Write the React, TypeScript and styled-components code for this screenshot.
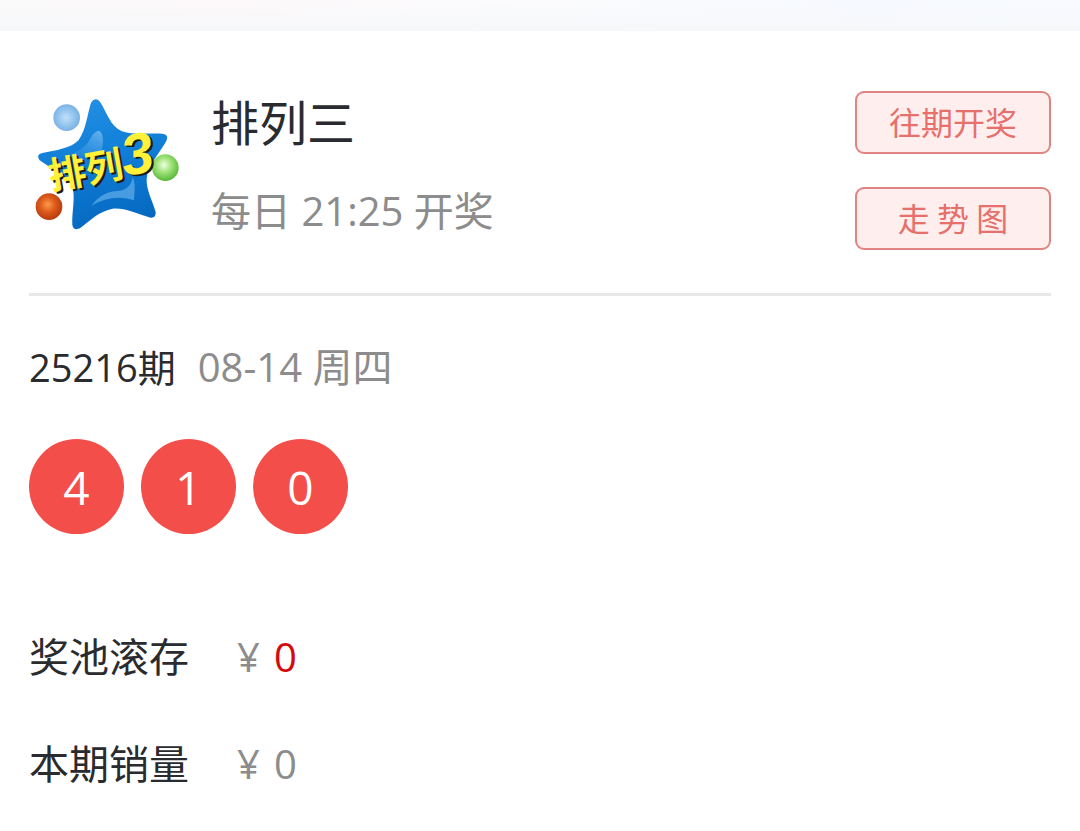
import styled, { createGlobalStyle } from "styled-components";

const balls = [4, 1, 0];

const stats = [
  { label: "奖池滚存", amount: "0", highlight: true },
  { label: "本期销量", amount: "0", highlight: false },
];

const Logo = () => (
  <LogoSvg viewBox="27 18 456 456" role="img" aria-label="排列3">
    <defs>
      <linearGradient id="star" x1="0.3" y1="0" x2="0.5" y2="1">
        <stop offset="0" stopColor="#2390e4" />
        <stop offset="0.5" stopColor="#0f7cd6" />
        <stop offset="1" stopColor="#0568c0" />
      </linearGradient>
      <linearGradient id="shine" x1="0.8" y1="0" x2="0.2" y2="1">
        <stop offset="0" stopColor="#86c4f4" stopOpacity="0.65" />
        <stop offset="1" stopColor="#3b9be8" stopOpacity="0.15" />
      </linearGradient>
      <radialGradient id="blueBall" cx="0.48" cy="0.5" r="0.52">
        <stop offset="0" stopColor="#c2e0f8" />
        <stop offset="0.6" stopColor="#93c4ee" />
        <stop offset="1" stopColor="#79b0e2" />
      </radialGradient>
      <radialGradient id="greenBall" cx="0.45" cy="0.4" r="0.6">
        <stop offset="0" stopColor="#f0ffe6" />
        <stop offset="0.45" stopColor="#a2e47c" />
        <stop offset="1" stopColor="#58b839" />
      </radialGradient>
      <radialGradient id="orangeBall" cx="0.45" cy="0.42" r="0.58">
        <stop offset="0" stopColor="#ff9a48" />
        <stop offset="0.5" stopColor="#dc5a1c" />
        <stop offset="1" stopColor="#b93a0c" />
      </radialGradient>
    </defs>
    <path
      fill="url(#star)"
      d="M213 53Q225 34 240 50C259 79 271 124 306 139C340 151 389 144 427 146Q448 149 439 168C421 202 382 242 380 281C378 315 399 350 407 381Q409 399 392 398C361 391 319 368 278 371C239 378 211 405 180 430Q160 438 157 420C155 382 167 337 157 304C141 267 91 251 58 225Q47 208 67 204C106 196 154 190 176 165C199 132 202 87 213 53Z"
    />
    <path
      fill="url(#shine)"
      d="M238 137C254 148 250 183 242 205C205 216 161 219 126 221C160 205 192 194 207 168C215 153 224 137 238 137Z"
    />
    <path
      fill="#62aeea"
      fillOpacity="0.7"
      d="M338 277C348 297 343 323 342 346C302 332 255 337 214 363C232 335 263 318 294 318C319 315 333 304 338 277Z"
    />
    <circle cx="140" cy="98" r="40" fill="url(#blueBall)" />
    <circle cx="436" cy="248" r="40" fill="url(#greenBall)" />
    <circle cx="87" cy="365" r="40" fill="url(#orangeBall)" />
    <g transform="rotate(-10 195 250)">
      <LogoText x="90" y="302" fill="#1c1c12">排列</LogoText>
      <LogoText x="84" y="296" fill="#fff03a">排列</LogoText>
      <LogoDigit x="314" y="300" fill="#1c1c12">3</LogoDigit>
      <LogoDigit x="308" y="294" fill="#fff03a">3</LogoDigit>
    </g>
  </LogoSvg>
);

export default function App() {
  return (
    <>
      <GlobalStyle />
      <TopBand />
      <Card>
        <Header>
          <Logo />
          <Heading>
            <Title>排列三</Title>
            <Schedule>每日 21:25 开奖</Schedule>
          </Heading>
          <Actions>
            <ActionButton type="button">往期开奖</ActionButton>
            <ActionButton type="button">走 势 图</ActionButton>
          </Actions>
        </Header>
        <Period>
          <Issue>25216期</Issue>
          <DrawDate>08-14 周四</DrawDate>
        </Period>
        <Balls>
          {balls.map((n, i) => (
            <Ball key={i}>{n}</Ball>
          ))}
        </Balls>
        <Stats>
          {stats.map(({ label, amount, highlight }) => (
            <StatRow key={label}>
              <dt>{label}</dt>
              <Amount>
                <span>¥</span>
                <Value $highlight={highlight}>{amount}</Value>
              </Amount>
            </StatRow>
          ))}
        </Stats>
      </Card>
    </>
  );
}

const GlobalStyle = createGlobalStyle`
  * {
    box-sizing: border-box;
  }
  body {
    margin: 0;
    background: #fff;
    color: #2a2b2f;
    font-family: "Open Sans", "Noto Sans CJK SC", sans-serif;
    font-size: 40px;
    font-weight: 400;
    line-height: 64px;
  }
`;

const TopBand = styled.div`
  height: 31px;
  background: linear-gradient(to bottom, rgba(246, 248, 250, 0), #f6f8fa),
    linear-gradient(to right, #fbfafa, #fdf8f9 20%, #fbfbfd 50%, #f6f9ff 80%, #f8faff);
`;

const Card = styled.main`
  padding: 60px 29px 32px;
`;

const Header = styled.header`
  display: flex;
  align-items: flex-start;
  padding-bottom: 43px;
  border-bottom: 3px solid #e8e8e8;
`;

const LogoSvg = styled.svg`
  flex: none;
  width: 152px;
  height: 152px;
  margin-right: 30px;
`;

const LogoText = styled.text`
  font-family: "Noto Sans CJK SC", sans-serif;
  font-size: 112px;
  font-weight: 700;
`;

const LogoDigit = styled.text`
  font-family: "Liberation Sans", sans-serif;
  font-size: 174px;
  font-style: italic;
  font-weight: 700;
`;

const Heading = styled.div`
  display: flex;
  flex: 1;
  flex-direction: column;
  gap: 24px;
`;

const Title = styled.h1`
  margin: 0;
  font-size: 48px;
  font-weight: 400;
`;

const Schedule = styled.div`
  color: #8c8c8c;
`;

const Actions = styled.div`
  display: flex;
  flex-direction: column;
  gap: 33px;
`;

const ActionButton = styled.button`
  width: 196px;
  height: 63px;
  padding: 0 0 4px;
  border: 2px solid #e08482;
  border-radius: 9px;
  background: #ffeeee;
  color: #e6706c;
  font-family: "Noto Sans CJK SC", sans-serif;
  font-size: 32px;
  line-height: 48px;
  cursor: pointer;
`;

const Period = styled.div`
  display: flex;
  gap: 22px;
  margin-top: 39px;
`;

const Issue = styled.span`
  font-size: 38px;
`;

const DrawDate = styled.span`
  color: #8c8c8c;
`;

const Balls = styled.div`
  display: flex;
  gap: 17px;
  margin-top: 40px;
`;

const Ball = styled.span`
  display: flex;
  align-items: center;
  justify-content: center;
  width: 95px;
  height: 95px;
  border-radius: 50%;
  background: #f44e4b;
  color: #fff;
  font-size: 46px;
`;

const Stats = styled.dl`
  display: flex;
  flex-direction: column;
  gap: 43px;
  margin: 91px 0 0;
`;

const StatRow = styled.div`
  display: flex;
  gap: 48px;
`;

const Amount = styled.dd`
  display: flex;
  gap: 14px;
  margin: 0;
  color: #8c8c8c;
`;

const Value = styled.span<{ $highlight: boolean }>`
  color: ${({ $highlight }) => ($highlight ? "#d4090d" : "inherit")};
`;
